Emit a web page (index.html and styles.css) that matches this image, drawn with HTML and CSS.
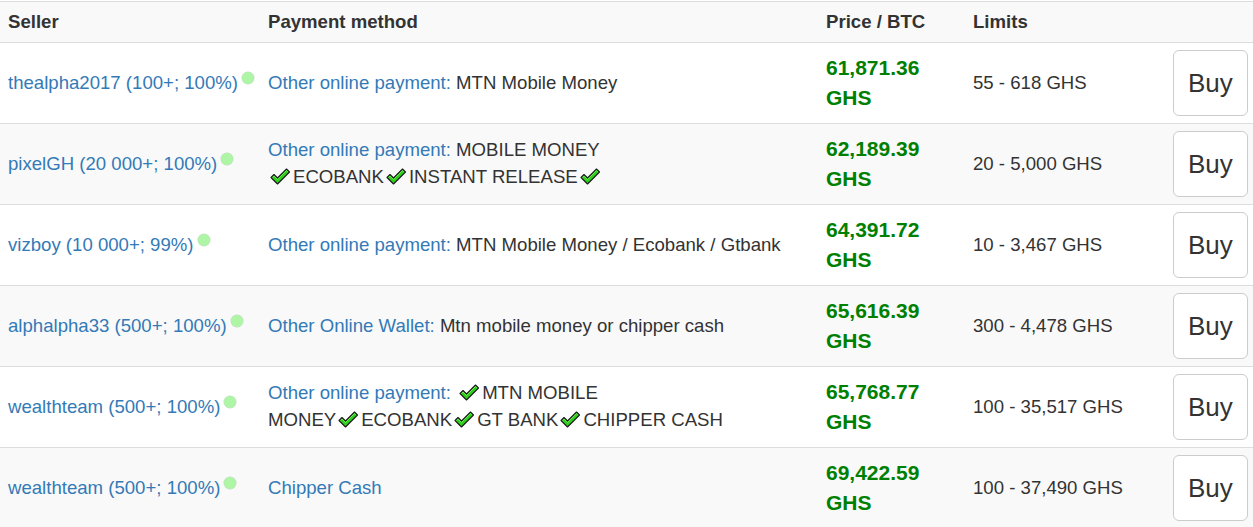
FILE: index.html
```html
<!DOCTYPE html>
<html>
<head>
<meta charset="utf-8">
<link rel="stylesheet" href="styles.css">
</head>
<body>
<svg class="defs" width="0" height="0" aria-hidden="true">
  <defs>
    <symbol id="chk" viewBox="0 0 20 17">
      <path d="M1 9.5 L4 6.5 L7.5 10 L16.5 1 L19.5 4 L7.5 16 Z" fill="#2fcf1d" stroke="#1b1b1b" stroke-width="1.1" stroke-linejoin="round"/>
      <path d="M2.5 9.5 L4 8 L7.5 11.5 L16.5 2.5 L17.8 3.8" fill="none" stroke="#7cf05e" stroke-width="0.8"/>
    </symbol>
  </defs>
</svg>
<table class="offers">
  <colgroup>
    <col class="c-seller"><col class="c-pay"><col class="c-price"><col class="c-limits"><col class="c-buy">
  </colgroup>
  <tr class="head">
    <th>Seller</th>
    <th>Payment method</th>
    <th>Price / BTC</th>
    <th>Limits</th>
    <th></th>
  </tr>
  <tr>
    <td class="seller"><a class="lnk" href="#">thealpha2017 (100+; 100%)</a><span class="dot"></span></td>
    <td><a class="lnk" href="#">Other online payment:</a> MTN Mobile Money</td>
    <td class="price">61,871.36 GHS</td>
    <td>55 - 618 GHS</td>
    <td><a class="buy" href="#">Buy</a></td>
  </tr>
  <tr>
    <td class="seller"><a class="lnk" href="#">pixelGH (20 000+; 100%)</a><span class="dot"></span></td>
    <td><a class="lnk" href="#">Other online payment:</a> MOBILE MONEY<br><svg class="ck ck-first"><use href="#chk"/></svg>ECOBANK<svg class="ck"><use href="#chk"/></svg>INSTANT RELEASE<svg class="ck"><use href="#chk"/></svg></td>
    <td class="price">62,189.39 GHS</td>
    <td>20 - 5,000 GHS</td>
    <td><a class="buy" href="#">Buy</a></td>
  </tr>
  <tr>
    <td class="seller"><a class="lnk" href="#">vizboy (10 000+; 99%)</a><span class="dot"></span></td>
    <td><a class="lnk" href="#">Other online payment:</a> MTN Mobile Money / Ecobank / Gtbank</td>
    <td class="price">64,391.72 GHS</td>
    <td>10 - 3,467 GHS</td>
    <td><a class="buy" href="#">Buy</a></td>
  </tr>
  <tr>
    <td class="seller"><a class="lnk" href="#">alphalpha33 (500+; 100%)</a><span class="dot"></span></td>
    <td><a class="lnk" href="#">Other Online Wallet:</a> Mtn mobile money or chipper cash</td>
    <td class="price">65,616.39 GHS</td>
    <td>300 - 4,478 GHS</td>
    <td><a class="buy" href="#">Buy</a></td>
  </tr>
  <tr>
    <td class="seller"><a class="lnk" href="#">wealthteam (500+; 100%)</a><span class="dot"></span></td>
    <td><a class="lnk" href="#">Other online payment:</a> <svg class="ck ck-lead"><use href="#chk"/></svg>MTN MOBILE<br>MONEY<svg class="ck"><use href="#chk"/></svg>ECOBANK<svg class="ck"><use href="#chk"/></svg>GT BANK<svg class="ck"><use href="#chk"/></svg>CHIPPER CASH</td>
    <td class="price">65,768.77 GHS</td>
    <td>100 - 35,517 GHS</td>
    <td><a class="buy" href="#">Buy</a></td>
  </tr>
  <tr>
    <td class="seller"><a class="lnk" href="#">wealthteam (500+; 100%)</a><span class="dot"></span></td>
    <td><a class="lnk" href="#">Chipper Cash</a></td>
    <td class="price">69,422.59 GHS</td>
    <td>100 - 37,490 GHS</td>
    <td><a class="buy" href="#">Buy</a></td>
  </tr>
</table>
</body>
</html>
```

FILE: styles.css
```css
html, body {
  margin: 0;
  padding: 0;
  background: #fff;
}
body {
  font-family: "Liberation Sans", Arial, sans-serif;
  font-size: 18.6px;
  line-height: 1.42857;
  color: #333;
}
.defs {
  position: absolute;
  width: 0;
  height: 0;
  overflow: hidden;
}
.offers {
  width: 1253px;
  margin-top: 1px;
  border-collapse: collapse;
  border-spacing: 0;
  table-layout: fixed;
}
.c-seller { width: 260px; }
.c-pay { width: 558px; }
.c-price { width: 147px; }
.c-limits { width: 200px; }
.c-buy { width: 88px; }

.offers th,
.offers td {
  padding: 7px 8px;
  border-top: 1px solid #ddd;
  vertical-align: middle;
  text-align: left;
}
.offers th {
  font-weight: bold;
  line-height: 26px;
}
.offers tr:nth-child(odd) {
  background: #f9f9f9;
}
.offers tr:nth-child(even) {
  background: #fff;
}
.offers .seller {
  white-space: nowrap;
  overflow: visible;
}
.lnk {
  color: #337ab7;
  text-decoration: none;
}
.dot {
  display: inline-block;
  width: 12px;
  height: 12px;
  margin-left: 4px;
  border-radius: 50%;
  background: #aef5a6;
  box-shadow: 0 0 0 0.5px rgba(160, 200, 160, 0.6);
  vertical-align: 5px;
}
.price {
  color: #008000;
  font-weight: bold;
  font-size: 21px;
  line-height: 30px;
}
.ck {
  display: inline-block;
  width: 20px;
  height: 17px;
  margin: 0 3px 0 2px;
  vertical-align: -2px;
}
.ck-first {
  margin-left: 2px;
}
.ck-lead {
  margin-left: 3px;
}
.buy {
  display: inline-block;
  box-sizing: border-box;
  height: 66px;
  padding: 0 14px;
  border: 1px solid #ccc;
  border-radius: 6px;
  background: #fff;
  color: #333;
  font-size: 26px;
  line-height: 64px;
  text-decoration: none;
}
```
